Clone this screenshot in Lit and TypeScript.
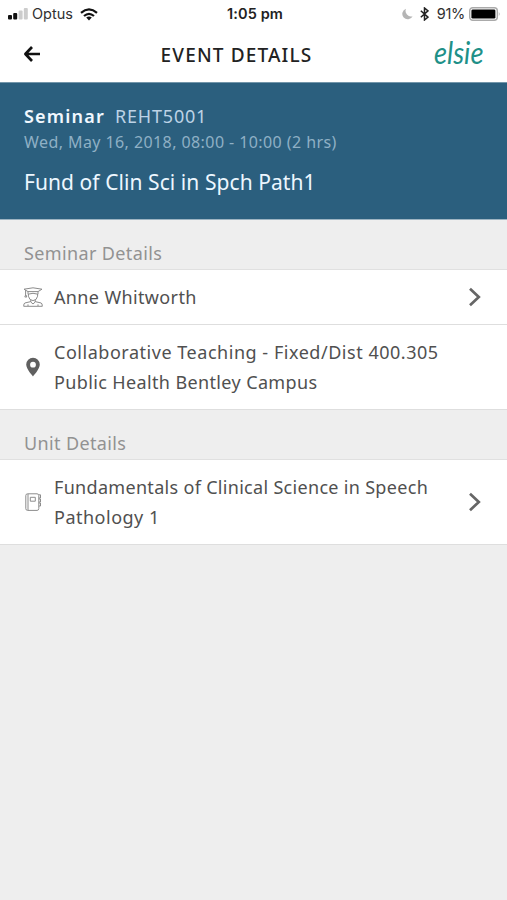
import { LitElement, html, css, svg } from "lit";
import { customElement } from "lit/decorators.js";

@customElement("status-bar")
class StatusBar extends LitElement {
  static styles = css`
    :host { display: grid; grid-template-columns: 1fr auto 1fr; align-items: center; height: 28px; padding: 0 6px 0 8px; font: 14.5px/28px Inter, sans-serif; color: #303030; background: #fff; }
    .side { display: flex; align-items: center; height: 28px; }
    .right { justify-content: flex-end; }
    .time { padding-left: 1px; font-weight: 600; color: #222; letter-spacing: 0.1px; }
    .carrier { margin: 0 7px 0 4px; }
    .percent { margin: 0 4px 0 8px; letter-spacing: -0.3px; }
    .moon { margin-right: 7px; }
    svg { display: block; flex: none; }
  `;
  render() {
    return html`
      <div class="side">
        <svg width="20" height="12" viewBox="0 0 20 12">
          <rect x="0" y="7" width="4" height="4.5" rx="1" fill="#111" />
          <rect x="5.2" y="5" width="4" height="6.5" rx="1" fill="#111" />
          <rect x="10.6" y="2.5" width="4" height="9" rx="1" fill="#ccc" />
          <rect x="15.8" y="0" width="4" height="11.5" rx="1" fill="#ccc" />
        </svg>
        <span class="carrier">Optus</span>
        <svg width="18" height="13" viewBox="0 0 18 13" fill="none" stroke="#111" stroke-width="2.2">
          <path d="M1 4.8Q9-2 17 4.8M4 8Q9 3.6 14 8" />
          <path d="M9 12.6L6.2 9.6Q9 7.4 11.8 9.6Z" fill="#111" stroke="none" />
        </svg>
      </div>
      <span class="time">1:05 pm</span>
      <div class="side right">
        <svg class="moon" width="11" height="12" viewBox="0 0 11 12"><path d="M4 .8A5.4 5.4 0 1 0 10.6 8.2A5.5 5.5 0 0 1 4 .8Z" fill="#b5b5b5" /></svg>
        <svg width="9" height="14" viewBox="0 0 9 14" fill="none" stroke="#222" stroke-width="1.5"><path d="M.8 3.8L8 10.2L4.5 13V1L8 3.8L.8 10.2" /></svg>
        <span class="percent">91%</span>
        <svg width="32" height="14" viewBox="0 0 32 14">
          <rect x=".7" y=".7" width="27.6" height="12.6" rx="3" fill="#fff" stroke="#aaa" stroke-width="1.4" />
          <rect x="2.4" y="2.4" width="24" height="9.2" rx="1.4" fill="#000" />
          <path d="M29.8 4.8Q31.6 7 29.8 9.2Z" fill="#aaa" />
        </svg>
      </div>
    `;
  }
}

const chevron = html`<svg width="14" height="20" viewBox="0 0 14 20" fill="none" stroke="#666" stroke-width="2.7"><path d="M2 1.8L10.8 10L2 18.2" /></svg>`;

const icons = {
  lecturer: svg`<g fill="none" stroke="#8c8c8c" stroke-width="1">
    <path d="M1 2.2L10 .8L19 2.2L15 4.6H5ZM5 4.6V7.2Q10 5.4 15 7.2V4.6M2.6 3V8L1.8 10H3.8L3 8" />
    <path d="M5.4 7V9.2Q6.2 13.4 10 13.6Q13.8 13.4 14.6 9.2V7M7.8 13V15L10 17L12.2 15V13" />
    <path d="M7.8 14.6L1.8 16Q.7 16.4 .7 19.3H19.3Q19.3 16.4 18.2 16L12.2 14.6M5 17.4V19M15 17.4V19" />
  </g>`,
  pin: svg`<path fill="#606060" fill-rule="evenodd" d="M10 .8A6.8 6.8 0 0 0 3.2 7.6C3.2 12.2 10 19.4 10 19.4S16.8 12.2 16.8 7.6A6.8 6.8 0 0 0 10 .8ZM10 4.8A2.9 2.9 0 1 1 10 10.6A2.9 2.9 0 0 1 10 4.8Z" />`,
  book: svg`<g fill="none" stroke="#8c8c8c" stroke-width="1">
    <rect x="2.8" y="1.8" width="13" height="16.6" rx="1.8" />
    <path d="M5 2V18.2M7.3 5.3H12.3V9.2H7.3Z" />
    <path d="M15.8 2.8H17.5V6H15.8M15.8 7H17.5V10H15.8M15.8 11H17.5V14H15.8" />
  </g>`,
};

@customElement("detail-row")
class DetailRow extends LitElement {
  static properties = { icon: {}, lines: { attribute: false }, link: { type: Boolean } };
  declare icon: keyof typeof icons;
  declare lines: { text: string; cls: string }[];
  declare link: boolean;
  static styles = css`
    :host { display: flex; align-items: center; box-sizing: border-box; padding: 12px 25px 12px 23px; background: #fff; border-bottom: 1px solid #dedede; color: #505050; font: 18px/30px "Noto Sans", sans-serif; }
    svg { display: block; flex: none; }
    .body { flex: 1; margin-left: 11px; white-space: nowrap; }
    .person { letter-spacing: 0.36px; }
    .room { letter-spacing: 0.53px; }
    .campus { letter-spacing: 0.37px; }
    .unit { letter-spacing: 0.31px; }
    .unit-end { letter-spacing: 0.5px; }
  `;
  render() {
    return html`
      <svg width="20" height="20" viewBox="0 0 20 20">${icons[this.icon]}</svg>
      <div class="body">${this.lines.map((l) => html`<div class=${l.cls}>${l.text}</div>`)}</div>
      ${this.link ? chevron : ""}
    `;
  }
}

@customElement("app-root")
class AppRoot extends LitElement {
  static styles = css`
    :host { display: block; height: 900px; background: #eee; font-family: "Noto Sans", sans-serif; overflow: hidden; }
    .nav { display: grid; grid-template-columns: 18px 1fr 54px; align-items: center; height: 54px; padding: 0 21px 0 23px; background: #fff; }
    .back { margin-bottom: 3px; }
    .title { text-align: center; font-size: 19px; line-height: 54px; letter-spacing: 1.15px; color: #222; font-weight: 500; }
    .logo { width: 58px; height: 44px; margin-left: 2px; font: italic 31px/38px Lato, sans-serif; color: #209088; transform: scaleX(0.88); transform-origin: left center; }
    svg { display: block; }
    .hero { box-sizing: border-box; height: 138px; padding: 19px 24px 0; background: #2b5f7e; border-top: 1px solid #7396aa; border-bottom: 1px solid #9db4c2; white-space: nowrap; }
    .kind { display: flex; gap: 10px; height: 28px; font-size: 18px; line-height: 28px; color: #bdd3e6; }
    .name { font-weight: 600; letter-spacing: 1.2px; color: #f1f8ff; }
    .code { letter-spacing: 0.8px; }
    .date { height: 24px; font-size: 16px; line-height: 24px; color: #8fb0c5; letter-spacing: 0.42px; }
    .event { margin-top: 10px; font-size: 21px; line-height: 36px; color: #edf7ff; letter-spacing: 0.07px; }
    .section { box-sizing: border-box; height: 50px; padding: 18px 24px 0; font-size: 18px; line-height: 30px; color: #929292; letter-spacing: 0.37px; border-bottom: 1px solid #e0e0e0; }
  `;
  render() {
    return html`
      <status-bar></status-bar>
      <div class="nav">
        <svg class="back" width="18" height="16" viewBox="0 0 18 16" fill="none" stroke="#111" stroke-width="2.7" stroke-linejoin="round"><path d="M9 1L2.4 8L9 15M2.4 8H17" /></svg>
        <span class="title">EVENT DETAILS</span>
        <span class="logo">elsie</span>
      </div>
      <div class="hero">
        <div class="kind"><span class="name">Seminar</span><span class="code">REHT5001</span></div>
        <div class="date">Wed, May 16, 2018, 08:00 - 10:00 (2 hrs)</div>
        <div class="event">Fund of Clin Sci in Spch Path1</div>
      </div>
      <div class="section">Seminar Details</div>
      <detail-row icon="lecturer" link .lines=${[{ text: "Anne Whitworth", cls: "person" }]}></detail-row>
      <detail-row icon="pin" .lines=${[
        { text: "Collaborative Teaching - Fixed/Dist 400.305", cls: "room" },
        { text: "Public Health Bentley Campus", cls: "campus" },
      ]}></detail-row>
      <div class="section">Unit Details</div>
      <detail-row icon="book" link .lines=${[
        { text: "Fundamentals of Clinical Science in Speech", cls: "unit" },
        { text: "Pathology 1", cls: "unit-end" },
      ]}></detail-row>
    `;
  }
}
